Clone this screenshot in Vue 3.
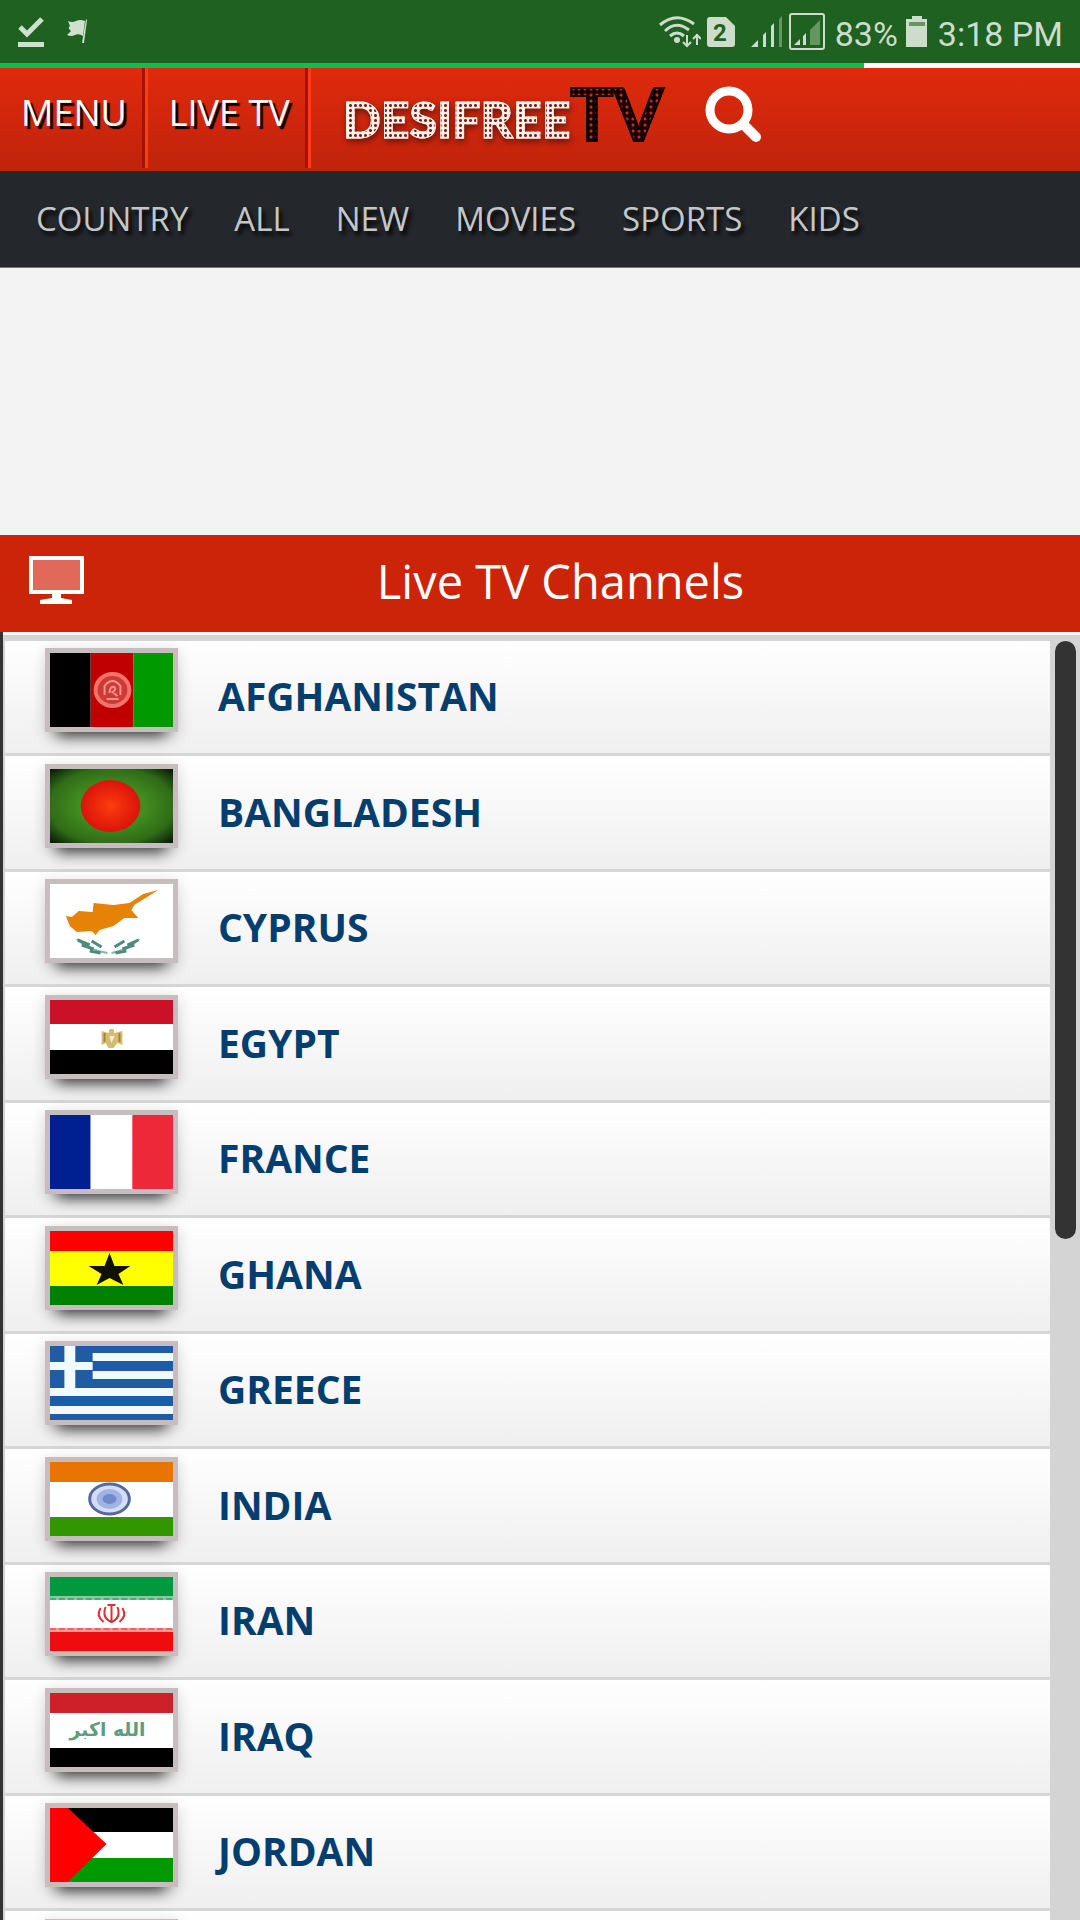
<template>
  <div class="page">
    <div class="status">
      <div class="status-left">
        <svg width="26" height="32" viewBox="0 0 26 32">
          <path d="M2 11 L9 18 L24 3" fill="none" stroke="#cfe0cf" stroke-width="5" />
          <rect x="0" y="26" width="26" height="5" fill="#cfe0cf" />
        </svg>
        <svg width="21" height="26" viewBox="0 0 21 26">
          <path d="M1 2 Q5 4 9 2 Q13 0 18 2 L16 17 Q12 14 8 16 Q4 18 0 16 L4 12 Q0 9 3 7 Z" fill="#cfe0cf" />
          <path d="M19 0 L20 1 L17 24 L15 24 Z" fill="#cfe0cf" />
        </svg>
      </div>
      <div class="status-right">
        <svg width="42" height="32" viewBox="0 0 42 32">
          <g fill="none" stroke="#cddccb" stroke-width="3">
            <path d="M1 9 Q17 -5 35 8" />
            <path d="M6 15 Q17 4 30 14" />
            <path d="M11 20 Q18 14 25 20" />
          </g>
          <circle cx="18" cy="24" r="3" fill="#cddccb" />
          <path d="M28 19 V30 M24 26 L28 30 L32 26 M38 29 V18 M34 23 L38 19 L42 23" fill="none" stroke="#cddccb" stroke-width="2" />
        </svg>
        <svg class="sim" width="28" height="32" viewBox="0 0 28 32">
          <path d="M3 1 H19 L28 10 V28 Q28 31 25 31 H3 Q0 31 0 28 V4 Q0 1 3 1 Z" fill="#cddccb" />
          <text x="13" y="25" text-anchor="middle" font-family="Roboto" font-weight="700" font-size="24" fill="#1e6120">2</text>
        </svg>
        <svg class="bars" width="32" height="34" viewBox="0 0 32 34">
          <path d="M0 32 L7 25 V32 Z M12 32 V20 L15 17 V32 Z M20 32 V11 L23 8 V32 Z" fill="#cddccb" />
          <path d="M28 32 V4 L31 1 V32 Z" fill="#64965f" />
        </svg>
        <svg class="bars2" width="37" height="38" viewBox="0 0 37 38">
          <rect x="1" y="1" width="34" height="35" rx="2" fill="none" stroke="#cddccb" stroke-width="2" />
          <path d="M5 32 L11 26 V32 Z M14 32 V23 L17 20 V32 Z" fill="#cddccb" />
          <path d="M21 32 V17 L31 7 V32 Z" fill="#64965f" />
        </svg>
        <span>83%</span>
        <svg class="battery" width="22" height="32" viewBox="0 0 22 32">
          <path d="M6 0 H16 V3 H21 V31 H0 V3 H6 Z" fill="#cddccb" />
          <rect x="3" y="6" width="16" height="4" fill="#64965f" />
        </svg>
        <span>3:18 PM</span>
      </div>
    </div>
    <div class="progress"><div class="progress-bar" :style="{ width: loaded + '%' }"></div></div>

    <header class="header">
      <a href="#menu" class="head-link">MENU</a>
      <a href="#live" class="head-link">LIVE TV</a>
      <a href="#home" class="logo"><span class="logo-name">DESIFREE</span><span class="logo-tv">TV</span></a>
      <button class="search" type="button" aria-label="Search">
        <svg width="58" height="58" viewBox="0 0 58 58">
          <circle cx="24" cy="24" r="19" fill="none" stroke="#fff" stroke-width="9" />
          <path d="M39 39 L51 51" stroke="#fff" stroke-width="10" stroke-linecap="round" />
        </svg>
      </button>
    </header>

    <nav class="nav">
      <a v-for="item in menu" :key="item" href="#">{{ item }}</a>
    </nav>

    <div class="ad"></div>

    <div class="title">
      <svg width="56" height="48" viewBox="0 0 56 48">
        <rect x="2" y="2" width="51" height="34" fill="#e0695a" stroke="#fff" stroke-width="4" />
        <path d="M23 36 H32 V42 L43 44 V48 H11 V44 L23 42 Z" fill="#fff" />
      </svg>
      <h1>Live TV Channels</h1>
    </div>

    <main class="channels">
      <div class="panel">
        <ul class="list">
          <li v-for="(c, i) in countries" :key="i">
            <a href="#">
              <svg class="flag" viewBox="0 0 124 74" preserveAspectRatio="none" v-html="c.flag"></svg>
              <span>{{ c.name }}</span>
            </a>
          </li>
        </ul>
        <div class="scroll"><div class="thumb"></div></div>
      </div>
    </main>
  </div>
</template>

<script setup>
const loaded = 80
const menu = ['COUNTRY', 'ALL', 'NEW', 'MOVIES', 'SPORTS', 'KIDS']

// horizontal stripe
const h = (y, height, color) => `<rect y="${y}" width="124" height="${height}" fill="${color}"/>`
// vertical stripe
const v = (x, width, color) => `<rect x="${x}" width="${width}" height="74" fill="${color}"/>`

const countries = [
  {
    name: 'AFGHANISTAN',
    flag: v(0, 41, '#000') + v(41, 43, '#c00000') + v(84, 40, '#009a00') +
      '<ellipse cx="63" cy="37" rx="17" ry="16" fill="#cf3a36" stroke="#f2726c" stroke-width="4"/>' +
      '<path d="M55 42 V33 Q63 23 71 33 V42 M57 46 L69 46 M60 40 Q60 33 65 34 Q67 37 63 39 L68 43" fill="none" stroke="#f0958d" stroke-width="2"/>'
  },
  {
    name: 'BANGLADESH',
    flag: '<defs><radialGradient id="bgGreen" r="0.68"><stop offset="0.4" stop-color="#438c20"/><stop offset="0.75" stop-color="#2f6c17"/><stop offset="1" stop-color="#0c2008"/></radialGradient>' +
      '<radialGradient id="bgRed"><stop offset="0" stop-color="#fc3d0c"/><stop offset="1" stop-color="#da140b"/></radialGradient></defs>' +
      '<rect width="124" height="74" fill="url(#bgGreen)"/><ellipse cx="61" cy="37" rx="30" ry="26" fill="url(#bgRed)"/>'
  },
  {
    name: 'CYPRUS',
    flag: h(0, 74, '#fff') +
      '<path d="M16 32 L22 33 L29 27 L43 28 L44 19 L64 21 L80 19 L94 10 L109 6 L98 13 L85 21 L82 26 L89 34 L75 34 L64 42 L50 46 L46 51 L42 47 L27 48 L20 42 Z" fill="#e68306"/>' +
      '<path d="M27 55 Q38 66 58 69 M90 55 Q79 66 62 69" fill="none" stroke="#8ab5a6" stroke-width="2"/>' +
      '<path d="M28 56 L40 61 M32 61 L44 65 M40 67 L51 69 M42 57 L52 63 M89 56 L78 61 M85 61 L73 65 M77 67 L66 69 M75 57 L65 63" stroke="#4d8c7b" stroke-width="3"/>'
  },
  {
    name: 'EGYPT',
    flag: h(0, 24, '#cc1026') + h(24, 26, '#fff') + h(50, 24, '#000') +
      '<path d="M52 31 L59 33 L60 29 L64 29 L65 33 L73 31 V45 L68 43 L64 48 H59 L56 43 L52 45 Z" fill="#d5bc74"/>' +
      '<path d="M55 33 V42 M70 33 V42" stroke="#a48736" stroke-width="2"/><path d="M60 36 L65 36 L62 43 Z" fill="#fff4d8"/>'
  },
  { name: 'FRANCE', flag: v(0, 41, '#002092') + v(41, 42, '#fff') + v(83, 41, '#ed2939') },
  {
    name: 'GHANA',
    flag: h(0, 20, '#fe0000') + h(20, 35, '#ffff00') + h(55, 19, '#008000') +
      '<path d="M60 22 L65 35 L81 35 L69 43 L74 54 L60 47 L47 54 L52 43 L39 35 L55 35 Z" fill="#111100"/>'
  },
  {
    name: 'GREECE',
    flag: h(0, 74, '#1f5ca6') +
      '<path d="M43 11 H124 M43 29 H124 M0 46 H124 M0 64 H124 M0 20 H43" stroke="#f0faff" stroke-width="8"/>' +
      '<path d="M20 0 V46" stroke="#f0faff" stroke-width="11"/>'
  },
  {
    name: 'INDIA',
    flag: h(0, 20, '#e87502') + h(20, 35, '#fff') + h(55, 19, '#319600') +
      '<ellipse cx="60" cy="37" rx="20" ry="15" fill="#d3def6" stroke="#56689d" stroke-width="3"/>' +
      '<ellipse cx="60" cy="37" rx="13" ry="10" fill="#a0b3e2"/><ellipse cx="60" cy="37" rx="7" ry="5" fill="#7089cb"/>'
  },
  {
    name: 'IRAN',
    flag: h(0, 20, '#00993e') + h(20, 33, '#fff') + h(53, 21, '#ee0c0e') +
      '<path d="M0 21 H124" stroke="#86cba0" stroke-width="4"/><path d="M0 53 H124" stroke="#f49b96" stroke-width="4"/>' +
      '<path d="M0 22 H124" stroke="#4ea873" stroke-width="2" stroke-dasharray="6 3"/><path d="M0 52 H124" stroke="#e06a62" stroke-width="2" stroke-dasharray="6 3"/>' +
      '<path d="M62 27 V46 M58 28 H66 M56 30 Q52 41 62 45 M68 30 Q72 41 62 45 M51 31 Q46 39 54 45 M73 31 Q78 39 70 45" fill="none" stroke="#db3036" stroke-width="2"/>'
  },
  {
    name: 'IRAQ',
    flag: h(0, 20, '#cd2028') + h(20, 35, '#fff') + h(55, 19, '#000') +
      '<text x="58" y="43" text-anchor="middle" font-family="DejaVu Sans" font-weight="700" font-size="19" fill="#5a9f80">الله اكبر</text>'
  },
  {
    name: 'JORDAN',
    flag: h(0, 24, '#000') + h(24, 26, '#fff') + h(50, 24, '#009900') + '<path d="M0 0 H18 L57 36 L18 74 H0 Z" fill="#fe0000"/>'
  },
  { name: '', flag: '' }
]
</script>

<style>
body {
  background: #f3f3f3;
}
</style>

<style scoped>
.page {
  display: flex;
  flex-direction: column;
  height: 100vh;
  overflow: hidden;
  font-family: "Open Sans", sans-serif;
}
a {
  text-decoration: none;
}
svg {
  display: block;
  flex: none;
}

/* phone status bar */
.status {
  display: flex;
  justify-content: space-between;
  align-items: center;
  height: 63px;
  padding: 0 17px 0 18px;
  background: #1e6120;
  color: #cddccb;
  font-family: Roboto, sans-serif;
  font-size: 34px;
}
.status-left,
.status-right {
  display: flex;
  align-items: center;
}
.status-left {
  gap: 23px;
}
.status span {
  padding-top: 4px;
}
.sim {
  margin-left: 6px;
}
.bars {
  margin-left: 16px;
}
.bars2 {
  margin: 0 9px 0 6px;
}
.battery {
  margin: 0 10px 0 8px;
}
.progress {
  background: #fff;
}
.progress-bar {
  height: 5px;
  background: #0ac150;
}

.header {
  display: flex;
  height: 103px;
  background: linear-gradient(#df2a0d, #c0230b);
}
.head-link {
  box-sizing: border-box;
  height: 100px;
  padding: 0 18px 0 21px;
  border-right: 3px solid #ff3d14;
  box-shadow: inset -3px 0 #a01404;
  color: #fff;
  font-size: 36px;
  line-height: 90px;
  text-shadow: 3px 3px 1px #000;
}
.logo {
  display: flex;
  align-items: flex-start;
  margin-left: 32px;
}
.logo-name,
.logo-tv {
  font-family: Lato, sans-serif;
  font-weight: 900;
  color: transparent;
  -webkit-background-clip: text;
  background-clip: text;
}
.logo-name {
  font-size: 50px;
  line-height: 102px;
  background-image: radial-gradient(circle, #7c2118 1px, #fff1ea 2px);
  background-size: 5px 5px;
  -webkit-text-stroke: 1px #fff1ea;
  filter: drop-shadow(1px 3px 3px #6c1408);
}
.logo-tv {
  font-size: 72px;
  font-weight: 700;
  line-height: 90px;
  background-image: radial-gradient(circle, #d02a18 1px, #120000 2px);
  background-size: 6px 6px;
  -webkit-text-stroke: 2px #120000;
}
.search {
  margin: 18px 0 0 41px;
  padding: 0;
  border: 0;
  background: none;
  align-self: flex-start;
}

.nav {
  display: flex;
  gap: 46px;
  height: 96px;
  padding-left: 36px;
  border-bottom: 1px solid #777;
  background: #24282c;
}
.nav a {
  color: #c4c6c8;
  font-size: 33px;
  line-height: 96px;
  text-shadow: 3px 4px 4px #000;
}
.ad {
  height: 267px;
}

.title {
  display: flex;
  align-items: flex-start;
  height: 97px;
  padding: 0 44px 0 29px;
  background: #cb2409;
}
.title svg {
  margin-top: 21px;
}
.title h1 {
  flex: 1;
  margin: 0;
  color: #fff;
  font-size: 47px;
  font-weight: 400;
  line-height: 92px;
  text-align: center;
}

.channels {
  flex: 1;
  min-height: 0;
  padding-left: 3px;
  background: #333;
}
.panel {
  box-sizing: border-box;
  display: flex;
  height: 100%;
  padding: 6px 4px 0 2px;
  border-top: 3px solid #f8f4f4;
  background: #d4d4d4;
}
.list {
  flex: 1;
  margin: 0;
  padding: 0;
  overflow: hidden;
  list-style: none;
}
.list a {
  display: flex;
  align-items: center;
  gap: 40px;
  height: 112px;
  padding-left: 40px;
  border-bottom: 3px solid #d6d6d6;
  background: linear-gradient(#fff, #efefef);
  color: #043e6f;
  font-size: 39px;
  font-weight: 700;
}
.list li:nth-child(even) a {
  height: 113px;
}
.list span {
  padding-bottom: 3px;
}
.flag {
  width: 123px;
  height: 74px;
  margin-bottom: 14px;
  border: 5px solid #c6bebe;
  box-shadow: 0 16px 14px -12px rgba(0, 0, 0, 0.75), 0 3px 14px rgba(0, 0, 0, 0.16);
}
.scroll {
  width: 26px;
}
.thumb {
  width: 21px;
  height: 598px;
  margin-left: 5px;
  border-radius: 11px;
  background: #333;
}
</style>
